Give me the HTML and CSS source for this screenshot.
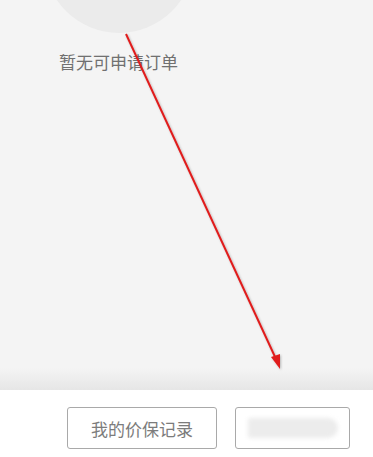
FILE: index.html
```html
<!DOCTYPE html>
<html lang="zh-CN">
<head>
<meta charset="utf-8">
<title>价保申请</title>
<link rel="stylesheet" href="styles.css">
</head>
<body>
<div class="page">
  <section class="content">
    <div class="empty-icon"></div>
    <p class="empty-text">暂无可申请订单</p>
  </section>
  <footer class="footer">
    <button class="btn btn-record">我的价保记录</button>
    <button class="btn btn-apply"><span class="blur"></span></button>
  </footer>
  <svg class="arrow" width="373" height="457" viewBox="0 0 373 457">
    <defs>
      <filter id="sh" x="-20%" y="-20%" width="140%" height="140%">
        <feDropShadow dx="1" dy="1" stdDeviation="0.8" flood-color="#000" flood-opacity="0.25"/>
      </filter>
    </defs>
    <g filter="url(#sh)">
      <line x1="126" y1="34" x2="276" y2="359" stroke="#e01e1e" stroke-width="2"/>
      <polygon points="280,369 271,357 280,354" fill="#e01e1e"/>
    </g>
  </svg>
</div>
</body>
</html>
```
FILE: styles.css
```css
html, body {
  margin: 0;
  padding: 0;
  background: #ffffff;
}
body {
  font-family: "Noto Sans CJK SC", "Noto Sans", sans-serif;
}
.page {
  position: relative;
  width: 373px;
  height: 457px;
  overflow: hidden;
}
.content {
  height: 390px;
  overflow: hidden;
  background: linear-gradient(to bottom, #f4f4f4 0, #f4f4f4 368px, #e6e6e6 390px);
}
.empty-icon {
  width: 150px;
  height: 150px;
  border-radius: 50%;
  background: #ebebeb;
  margin: -117px 0 0 44px;
}
.empty-text {
  margin: 17px 0 0 59px;
  font-size: 17px;
  line-height: 24px;
  color: #707070;
}
.footer {
  display: flex;
  justify-content: flex-end;
  gap: 18px;
  padding: 17px 23px 0 0;
}
.btn {
  height: 42px;
  border: 1px solid #a9a9a9;
  border-radius: 3px;
  background: #fff;
  font-family: "Noto Sans CJK SC", "Noto Sans", sans-serif;
  font-size: 17px;
  color: #7c7c7c;
  padding: 0;
  display: flex;
  align-items: center;
  justify-content: center;
}
.btn-record {
  width: 150px;
}
.btn-apply {
  width: 115px;
}
.blur {
  display: block;
  width: 90px;
  height: 20px;
  background: #ececec;
  border-radius: 2px 10px 10px 2px;
  filter: blur(2px);
}
.arrow {
  position: absolute;
  left: 0;
  top: 0;
  pointer-events: none;
}
```
